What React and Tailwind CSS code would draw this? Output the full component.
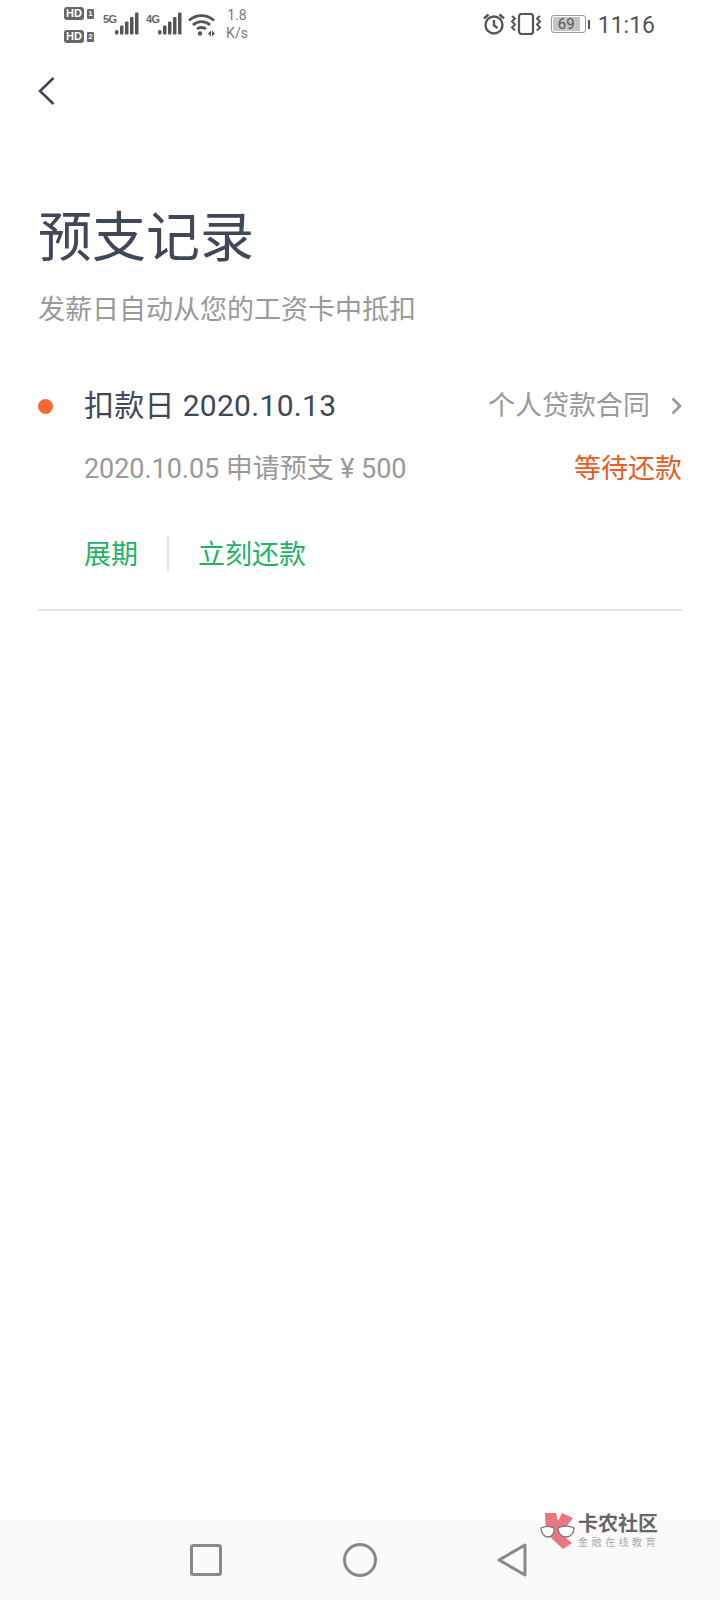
import React from "react";

const FONT = "font-['Roboto','Noto_Sans_CJK_SC',sans-serif]";

const Bars = () => (
  <svg width="24" height="23" viewBox="0 0 24 23" fill="#555">
    <rect x="0" y="18" width="3.500" height="4.500" rx="1.500" />
    <rect x="5" y="13.500" width="3.500" height="9" rx="1" />
    <rect x="10" y="9.500" width="3.500" height="13" rx="1" />
    <rect x="15" y="5" width="3.500" height="17.500" rx="1" />
    <rect x="20" y="0.500" width="3.500" height="22" rx="1" />
  </svg>
);

const HdBadge = ({ n }) => (
  <div className="flex items-center gap-[3px] h-[13px]">
    <span className="w-[20px] h-[13px] rounded-[3px] bg-[#666] text-white text-[11px] leading-[13px] font-bold text-center font-['Liberation_Sans',sans-serif]">
      HD
    </span>
    <span className="w-[7px] h-[10px] rounded-[1px] bg-[#666] text-white text-[8px] leading-[10px] font-bold text-center font-['Liberation_Sans',sans-serif]">
      {n}
    </span>
  </div>
);

const StatusBar = () => (
  <div className="h-[50px] flex justify-between pl-[64px] pr-[65px] text-[#555] shrink-0">
    <div className="flex items-start">
      <div className="flex flex-col gap-[10px] pt-[7px]">
        <HdBadge n="1" />
        <HdBadge n="2" />
      </div>
      <span className="ml-[9px] mt-[13px] w-[12px] text-[11px] leading-[12px] font-bold tracking-[-0.5px] text-[#666] font-['Liberation_Sans',sans-serif]">5G</span>
      <div className="mt-[12px]"><Bars /></div>
      <span className="ml-[7px] mt-[13px] w-[12px] text-[11px] leading-[12px] font-bold tracking-[-0.5px] text-[#666] font-['Liberation_Sans',sans-serif]">4G</span>
      <div className="mt-[12px]"><Bars /></div>
      <svg className="ml-[6px] mt-[13px]" width="28" height="23" viewBox="0 0 28 23" fill="none" stroke="#555" strokeWidth="2.800">
        <path d="M1 7.500C8 1 19 1 26 7.500" />
        <path d="M5 12C10 7.500 17 7.500 22 12" />
        <path d="M9 16C11.500 14 15.500 14 18 16" />
        <circle cx="12" cy="20.500" r="2.200" fill="#555" stroke="none" />
        <path d="M20 20.500l3-3v6zM24 17.500l3 3-3 3z" fill="#555" stroke="none" />
      </svg>
      <div className={`ml-[9px] mt-[6px] w-[24px] text-center text-[14px] leading-[18px] text-[#777] ${FONT}`}>
        <div>1.8</div>
        <div>K/s</div>
      </div>
    </div>
    <div className="flex items-start">
      <svg className="mt-[13px]" width="24" height="22" viewBox="0 0 24 22" fill="none" stroke="#555" strokeWidth="2.400">
        <circle cx="12" cy="12" r="8.500" />
        <path d="M12 7v5.500l3.500 2.500" />
        <path d="M2 5.500L6.500 1.500M22 5.500L17.500 1.500" />
      </svg>
      <svg className="ml-[4px] mt-[13px]" width="32" height="22" viewBox="0 0 32 22" fill="none" stroke="#555" strokeWidth="2">
        <rect x="9" y="1" width="14" height="20" rx="2.500" strokeWidth="2.200" />
        <path d="M2 3l3 2.500-3 3 3 3-3 3 3 3" strokeWidth="2" />
        <path d="M30 3l-3 2.500 3 3-3 3 3 3-3 3" strokeWidth="2" />
      </svg>
      <div className="ml-[9px] mt-[15px] flex items-center">
        <div className="w-[35px] h-[18px] rounded-[3px] border border-[#999] p-[1px] flex">
          <div className={`w-[27px] h-full rounded-[1px] bg-[#c4c4c4] text-[15px] leading-[14px] text-[#555] text-center ${FONT}`}>
            69
          </div>
        </div>
        <div className="ml-[2px] w-[2px] h-[9px] bg-[#555]" />
      </div>
      <span className={`ml-[8px] mt-[10px] text-[23px] leading-[32px] text-[#555] ${FONT}`}>11:16</span>
    </div>
  </div>
);

const LogoMark = () => (
  <svg width="36" height="37" viewBox="0 0 36 37">
    <path d="M5 0H16L18 8 22 0 33 5 26 14 20 20 32 30 23 36 6 20Z" fill="#ea7480" />
    <path d="M1 15c4-2 9-2 13 0 1 5-2 9-6 9-4 0-7-4-7-9zM18 15c5-3 12-2 16 0 0 5-3 9-8 9s-8-4-8-9z" fill="#fff" stroke="#777" strokeWidth="1.300" />
  </svg>
);

export default function App() {
  return (
    <div className={`relative w-[720px] h-[1600px] bg-white flex flex-col overflow-hidden ${FONT}`}>
      <StatusBar />

      <div className="flex-1 px-[38px]">
        <svg className="mt-[26px]" width="18" height="30" viewBox="0 0 18 30" fill="none" stroke="#3e4858" strokeWidth="2.600">
          <path d="M15.500 2L2 15l13.500 13" />
        </svg>

        <h1 className="mt-[98px] text-[54px] leading-[70px] font-normal text-[#3e4858]">预支记录</h1>
        <p className="mt-[15px] text-[27px] leading-[42px] text-[#999]">发薪日自动从您的工资卡中抵扣</p>

        <div className="mt-[53px] h-[44px] flex items-center">
          <div className="w-[15px] h-[15px] rounded-full bg-[#f26a2e]" />
          <span className="ml-[31px] text-[30px] leading-[44px] tracking-[0.300px] text-[#3e4858]">扣款日 2020.10.13</span>
          <span className="ml-auto text-[27px] leading-[44px] text-[#999]">个人贷款合同</span>
          <svg className="ml-[21px]" width="11" height="18" viewBox="0 0 11 18" fill="none" stroke="#999" strokeWidth="2.800">
            <path d="M1.500 1.500L9 9l-7.500 7.500" />
          </svg>
        </div>

        <div className="mt-[19px] h-[44px] flex items-center pl-[46px]">
          <span className="text-[27px] leading-[44px] tracking-[-0.050px] text-[#999]">2020.10.05 申请预支 ¥ 500</span>
          <span className="ml-auto text-[27px] leading-[44px] text-[#e65c23]">等待还款</span>
        </div>

        <div className="mt-[46px] h-[36px] flex items-center pl-[46px] text-[27px] text-[#1fb264]">
          <span>展期</span>
          <div className="ml-[29px] w-[2px] h-[36px] -translate-y-[2px] bg-[#e5e5e5]" />
          <span className="ml-[29px]">立刻还款</span>
        </div>

        <div className="mt-[36px] h-[2px] bg-[#e5e5e5]" />
      </div>

      <div className="h-[80px] bg-[#fafafa] flex items-center shrink-0 pl-[190px]">
        <svg width="32" height="32" viewBox="0 0 32 32" fill="none" stroke="#888" strokeWidth="3">
          <rect x="1.500" y="1.500" width="29" height="29" rx="2" />
        </svg>
        <svg className="ml-[121px]" width="34" height="34" viewBox="0 0 34 34" fill="none" stroke="#888" strokeWidth="3">
          <circle cx="17" cy="17" r="15.500" />
        </svg>
        <svg className="ml-[120px]" width="30" height="34" viewBox="0 0 30 34" fill="none" stroke="#888" strokeWidth="3" strokeLinejoin="round">
          <path d="M28 2v30L2 17z" />
        </svg>
      </div>

      {/* watermark over the nav bar */}
      <div className="absolute left-[540px] top-[1513px] flex items-start">
        <LogoMark />
        <div className="ml-[2px]">
          <div className="text-[20px] leading-[20px] font-bold text-[#666] font-['Noto_Sans_CJK_SC',sans-serif]">卡农社区</div>
          <div className="mt-[2px] text-[10px] leading-[14px] tracking-[3.500px] text-[#aaa] font-['Noto_Sans_CJK_SC',sans-serif]">金融在线教育</div>
        </div>
      </div>
    </div>
  );
}
